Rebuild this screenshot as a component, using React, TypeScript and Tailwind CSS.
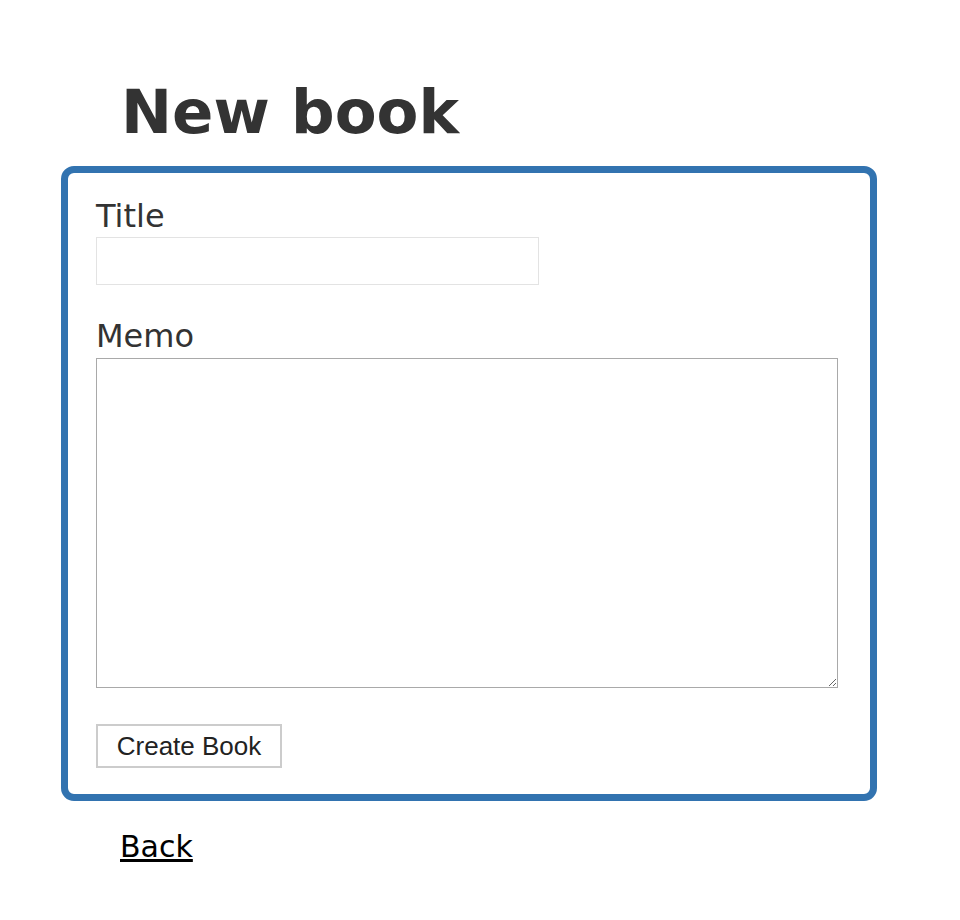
import React from "react";

export default function App() {
  return (
    <div className="min-h-[920px] w-[960px] bg-white pt-[76px] text-[#333]" style={{ fontFamily: '"DejaVu Sans", Verdana, sans-serif' }}>
      <h1 className="ml-[121px] text-[61px] font-bold leading-[72px] text-[#333]">New book</h1>
      <form
        className="ml-[61px] mt-[18px] flex w-[816px] flex-col rounded-[13px] border-[7px] border-[#3273b0] pb-[26px] pl-[28px] pt-[23px]"
        onSubmit={(e) => e.preventDefault()}
      >
        <label className="text-[32px] leading-[40px] text-[#333]">Title</label>
        <input
          type="text"
          className="mt-[1px] h-[48px] w-[443px] border border-[#e3e3e3] bg-white outline-none"
        />
        <label className="mt-[31px] text-[32px] leading-[40px] text-[#333]">Memo</label>
        <textarea className="mt-[2px] h-[330px] w-[742px] resize border border-[#a9a9a9] bg-white outline-none" />
        <div className="mt-[36px]">
          <button
            type="submit"
            className="h-[44px] w-[186px] border-2 border-[#cccccc] bg-white text-[26px] leading-[30px] text-[#222]"
            style={{ fontFamily: '"Liberation Sans", Arial, sans-serif' }}
          >
            Create Book
          </button>
        </div>
      </form>
      <div className="ml-[120px] mt-[28px]">
        <a href="#" className="text-[30px] leading-[36px] text-black underline">
          Back
        </a>
      </div>
    </div>
  );
}
